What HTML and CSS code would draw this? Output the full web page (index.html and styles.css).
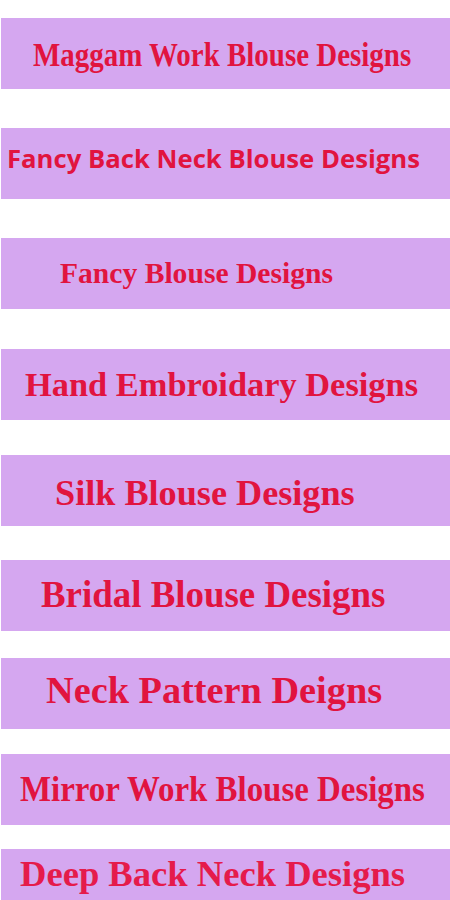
FILE: index.html
```html
<!DOCTYPE html>
<html lang="en">
<head>
    <meta charset="UTF-8">
    <meta name="viewport" content="width=device-width, initial-scale=1.0">
    <title>Blouse Designs</title>
    <link rel="stylesheet" href="styles.css">
</head>
<body>
    <!-- Daftar kategori desain blouse -->
    <ul class="menu">
        <li class="menu-item item-maggam"><span class="label">Maggam Work Blouse Designs</span></li>
        <li class="menu-item item-backneck"><span class="label">Fancy Back Neck Blouse Designs</span></li>
        <li class="menu-item item-fancy"><span class="label">Fancy Blouse Designs</span></li>
        <li class="menu-item item-hand"><span class="label">Hand Embroidary Designs</span></li>
        <li class="menu-item item-silk"><span class="label">Silk Blouse Designs</span></li>
        <li class="menu-item item-bridal"><span class="label">Bridal Blouse Designs</span></li>
        <li class="menu-item item-neck"><span class="label">Neck Pattern Deigns</span></li>
        <li class="menu-item item-mirror"><span class="label">Mirror Work Blouse Designs</span></li>
        <li class="menu-item item-deep"><span class="label">Deep Back Neck Designs</span></li>
    </ul>
</body>
</html>
```

FILE: styles.css
```css
/* Style dasar */
body {
    margin: 0;
    padding: 18px 0 0 1px;
    background-color: #ffffff;
    font-family: "Liberation Serif", "Times New Roman", serif;
    overflow: hidden;
}

.menu {
    list-style: none;
    margin: 0;
    padding: 0;
}

/* Kotak kategori */
.menu-item {
    display: flex;
    align-items: center;
    height: 71px;
    box-sizing: border-box;
    background-color: #d5a7f0;
    color: #e1143f;
    font-weight: bold;
    line-height: 1;
    white-space: nowrap;
}

.label {
    display: inline-block;
    transform-origin: left center;
}

/* Ukuran dan posisi tiap judul */
.item-maggam {
    padding-left: 32px;
    padding-top: 3px;
    font-size: 33px;
}

.item-maggam .label {
    transform: scaleX(0.877);
}

.item-backneck {
    margin-top: 39px;
    padding-left: 6px;
    padding-bottom: 10px;
    font-family: "Open Sans", "Noto Sans", sans-serif;
    font-size: 25.7px;
}

.item-fancy {
    margin-top: 39px;
    padding-left: 59px;
    font-size: 29.6px;
}

.item-hand {
    margin-top: 40px;
    padding-left: 24px;
    font-size: 34.4px;
}

.item-silk {
    margin-top: 35px;
    padding-left: 54px;
    padding-top: 5px;
    font-size: 36.2px;
}

.item-bridal {
    margin-top: 34px;
    padding-left: 40px;
    font-size: 36.9px;
}

.item-neck {
    margin-top: 27px;
    padding-left: 45px;
    padding-bottom: 6px;
    font-size: 38.3px;
}

.item-mirror {
    margin-top: 25px;
    padding-left: 19px;
    font-size: 35px;
}

.item-mirror .label {
    transform: scaleX(0.94);
}

.item-deep {
    margin-top: 24px;
    padding-left: 19px;
    padding-bottom: 20px;
    font-size: 36.6px;
    color: #e51b4b;
}
```
